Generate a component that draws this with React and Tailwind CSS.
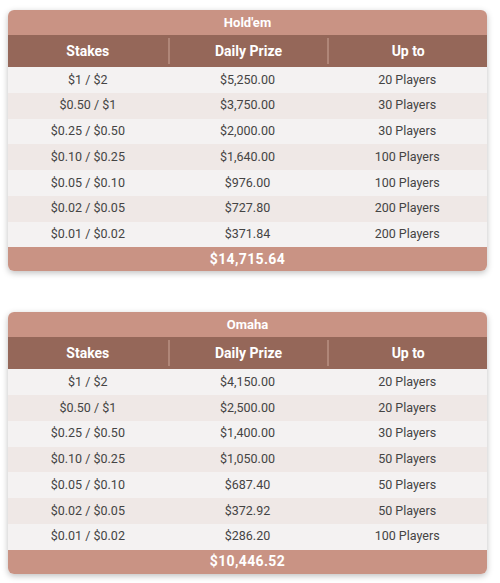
import React from 'react';

const holdem = [
  ['$1 / $2', '$5,250.00', '20 Players'],
  ['$0.50 / $1', '$3,750.00', '30 Players'],
  ['$0.25 / $0.50', '$2,000.00', '30 Players'],
  ['$0.10 / $0.25', '$1,640.00', '100 Players'],
  ['$0.05 / $0.10', '$976.00', '100 Players'],
  ['$0.02 / $0.05', '$727.80', '200 Players'],
  ['$0.01 / $0.02', '$371.84', '200 Players'],
];

const omaha = [
  ['$1 / $2', '$4,150.00', '20 Players'],
  ['$0.50 / $1', '$2,500.00', '20 Players'],
  ['$0.25 / $0.50', '$1,400.00', '30 Players'],
  ['$0.10 / $0.25', '$1,050.00', '50 Players'],
  ['$0.05 / $0.10', '$687.40', '50 Players'],
  ['$0.02 / $0.05', '$372.92', '50 Players'],
  ['$0.01 / $0.02', '$286.20', '100 Players'],
];

const PrizeTable = ({ title, rows, total }) => (
  <div className="w-[479px] rounded-md overflow-hidden shadow-[0_2px_6px_rgba(0,0,0,0.25)]">
    <div className="h-[25px] bg-[#c99384] flex items-center justify-center text-white font-bold text-[13px]">
      {title}
    </div>
    <div className="h-[32px] bg-[#956759] grid grid-cols-3 items-center text-white font-bold text-[14px]">
      <div className="text-center">Stakes</div>
      <div className="text-center border-l-2 border-[#b08678] h-[26px] flex items-center justify-center">Daily Prize</div>
      <div className="text-center border-l-2 border-[#b08678] h-[26px] flex items-center justify-center">Up to</div>
    </div>
    {rows.map((r, i) => (
      <div
        key={i}
        className={`h-[25.75px] grid grid-cols-3 items-center text-[12.5px] text-[#444] ${i % 2 === 0 ? 'bg-[#f4f2f2]' : 'bg-[#efe8e6]'}`}
      >
        <div className="text-center">{r[0]}</div>
        <div className="text-center">{r[1]}</div>
        <div className="text-center">{r[2]}</div>
      </div>
    ))}
    <div className="h-[24px] bg-[#c99384] flex items-center justify-center text-white font-bold text-[14px] tracking-wide">
      {total}
    </div>
  </div>
);

export default function App() {
  return (
    <div className="w-[500px] h-[583px] bg-white pt-[10px] pl-[8px] font-['Roboto',sans-serif]">
      <PrizeTable title="Hold'em" rows={holdem} total="$14,715.64" />
      <div className="h-[41px]" />
      <PrizeTable title="Omaha" rows={omaha} total="$10,446.52" />
    </div>
  );
}
